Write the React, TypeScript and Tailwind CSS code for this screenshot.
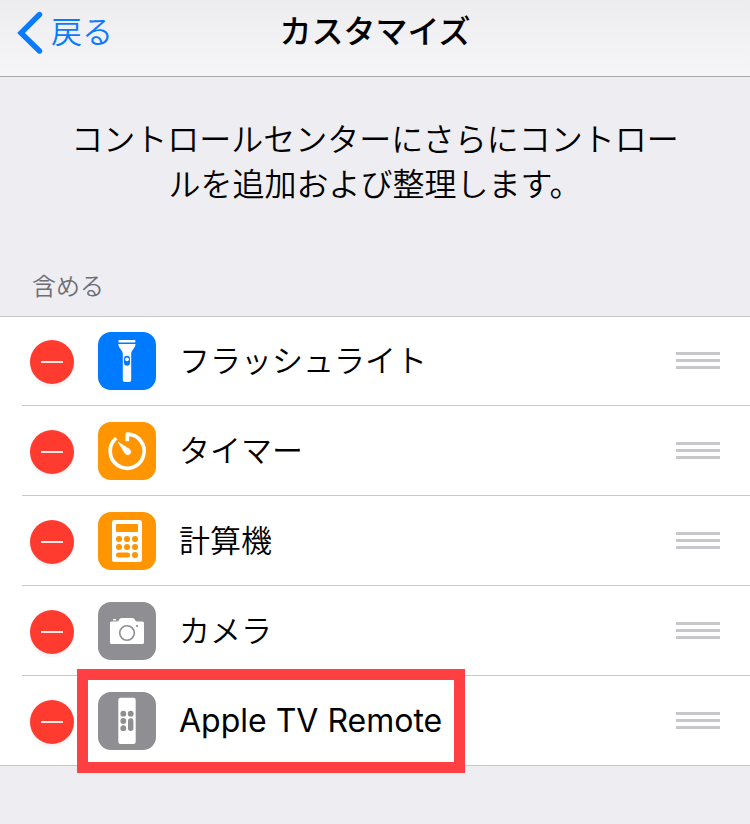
import React from 'react';

interface Control {
  id: string;
  label: string;
  color: string;
  icon: React.ReactNode;
  highlighted?: boolean;
}

const FlashlightIcon: React.FC = () => (
  <svg viewBox="0 0 58 58" className="h-full w-full" aria-hidden="true">
    <rect x="20.3" y="8" width="17.2" height="2.4" rx="1" fill="#fff" />
    <path d="M20.3 12h17.2c0 4.5-4.3 5.8-4.3 10v26a2 2 0 0 1-2 2h-4.4a2 2 0 0 1-2-2V22c0-4.2-4.5-5.5-4.5-10z" fill="#fff" />
    <rect x="26" y="23.7" width="6" height="10" rx="3" fill="#007aff" />
    <circle cx="29" cy="27.3" r="1.9" fill="#fff" />
  </svg>
);

const TimerIcon: React.FC = () => (
  <svg viewBox="0 0 58 58" className="h-full w-full" aria-hidden="true">
    <path
      d="M29.3 19.2V12.2A17 17 0 1 1 18.2 16.2"
      fill="none"
      stroke="#fff"
      strokeWidth="3.7"
      strokeLinejoin="round"
    />
    <path d="M20.1 20.1L31.3 26.9A3.2 3.2 0 1 1 26.9 31.3Z" fill="#fff" stroke="#fff" strokeWidth="0.5" strokeLinejoin="round" />
  </svg>
);

const CalculatorIcon: React.FC = () => (
  <svg viewBox="0 0 58 58" className="h-full w-full" aria-hidden="true">
    <rect x="14" y="8" width="30" height="42" rx="2.5" fill="#fff" />
    <g fill="#ff9500">
      <rect x="18" y="12" width="22" height="8" rx="1" />
      {[27, 35].map((y) => [21, 29, 37].map((x) => <circle key={`${x}-${y}`} cx={x} cy={y} r="3" />))}
      <rect x="18" y="40.5" width="14" height="5" rx="2.5" />
      <circle cx="37" cy="43" r="3" />
    </g>
  </svg>
);

const CameraIcon: React.FC = () => (
  <svg viewBox="0 0 58 58" className="h-full w-full" aria-hidden="true">
    <rect x="15" y="17" width="3.2" height="1.6" rx="0.5" fill="#fff" />
    <path d="M13.5 19.5h5.5c1.8 0 2.4-3.5 4.5-3.5h11c2.1 0 2.7 3.5 4.5 3.5h5.5a1.5 1.5 0 0 1 1.5 1.5v19.5a1.5 1.5 0 0 1-1.5 1.5h-31a1.5 1.5 0 0 1-1.5-1.5V21a1.5 1.5 0 0 1 1.5-1.5z" fill="#fff" />
    <circle cx="29" cy="31" r="7.3" fill="none" stroke="#8e8e93" strokeWidth="1.6" />
    <circle cx="39" cy="24" r="1.1" fill="#8e8e93" />
  </svg>
);

const RemoteIcon: React.FC = () => (
  <svg viewBox="0 0 58 58" className="h-full w-full" aria-hidden="true">
    <rect x="20.3" y="5.8" width="17.4" height="46.2" rx="2.2" fill="#fff" />
    <g fill="#8e8e93">
      <circle cx="25.3" cy="21.7" r="2.9" />
      <circle cx="32.7" cy="21.7" r="2.9" />
      <circle cx="25.3" cy="29" r="2.9" />
      <circle cx="25.3" cy="36.2" r="2.9" />
      <rect x="30" y="26.2" width="5.4" height="12.8" rx="2.7" />
    </g>
  </svg>
);

const controls: Control[] = [
  { id: 'flashlight', label: 'フラッシュライト', color: 'bg-[#007aff]', icon: <FlashlightIcon /> },
  { id: 'timer', label: 'タイマー', color: 'bg-[#ff9500]', icon: <TimerIcon /> },
  { id: 'calculator', label: '計算機', color: 'bg-[#ff9500]', icon: <CalculatorIcon /> },
  { id: 'camera', label: 'カメラ', color: 'bg-[#8e8e93]', icon: <CameraIcon /> },
  { id: 'remote', label: 'Apple TV Remote', color: 'bg-[#8e8e93]', icon: <RemoteIcon />, highlighted: true },
];

const ControlRow: React.FC<{ control: Control }> = ({ control }) => (
  <li className="group pl-[22px] last:border-b last:border-[#c8c7cc]">
    <div className="flex h-[90px] items-start border-b border-[#c8c7cc] pt-4 pr-[30px] pl-2 group-first:h-[89px] group-first:pt-[15px] group-last:h-[89px] group-last:border-b-0">
      <button
        type="button"
        aria-label={`${control.label}を削除`}
        className="mt-2 flex h-11 w-11 shrink-0 items-center justify-center rounded-full bg-[#ff3b30] shadow-[0_3px_2px_rgba(0,0,0,0.05)]"
      >
        <span className="h-[2px] w-[22px] bg-[#ffe5e3]" />
      </button>

      <div className="relative ml-6 flex items-center gap-[23px]">
        <span className={`h-[58px] w-[58px] shrink-0 overflow-hidden rounded-[13px] ${control.color}`}>
          {control.icon}
        </span>
        <span className="text-[31px] leading-[58px] font-[350] whitespace-nowrap group-last:text-[32px] group-last:font-normal">
          {control.label}
        </span>
        {control.highlighted && (
          <span className="pointer-events-none absolute -inset-y-[23px] -right-[23px] -left-[21px] border-[11px] border-[#ff4042]" />
        )}
      </div>

      <button
        type="button"
        aria-label={`${control.label}を並べ替え`}
        className="mt-5 ml-auto flex w-11 shrink-0 flex-col gap-1"
      >
        <span className="h-[3px] w-full bg-[#c7c7cc]" />
        <span className="h-[3px] w-full bg-[#c7c7cc]" />
        <span className="h-[3px] w-full bg-[#c7c7cc]" />
      </button>
    </div>
  </li>
);

const App: React.FC = () => {
  return (
    <div className="min-h-screen bg-[#eeedf2] font-['Inter','Noto_Sans_CJK_JP',sans-serif] text-black">
      {/* Navigation bar */}
      <header className="grid h-[77px] grid-cols-[1fr_auto_1fr] items-start border-b border-[#a7a7ab] bg-linear-to-b from-[#ededef] to-[#f6f6f8] pt-2">
        <a href="#settings" className="flex items-center gap-2 pl-[17px] text-[31px] leading-[48px] font-[350] text-[#0a7aff]">
          <svg viewBox="0 0 26 44" className="h-11 w-[26px]" aria-hidden="true">
            <path d="M22.5 5.5L4 24l18.5 18" fill="none" stroke="#0a7aff" strokeWidth="5.4" strokeLinecap="round" strokeLinejoin="miter" transform="translate(0 -1)" />
          </svg>
          戻る
        </a>
        <h1 className="text-[32px] leading-[48px] font-medium">カスタマイズ</h1>
      </header>

      <main>
        <p className="mx-auto max-w-[610px] pt-10 text-center text-[32px] leading-[45px] font-[350]">
          コントロールセンターにさらにコントロールを追加および整理します。
        </p>

        <h2 className="mt-[62px] pb-[11px] pl-8 text-[24px] leading-9 font-[350] text-[#6d6d72]">含める</h2>
        <ul className="border-t border-[#c8c7cc] bg-white">
          {controls.map((control) => (
            <ControlRow key={control.id} control={control} />
          ))}
        </ul>
      </main>
    </div>
  );
};

export default App;
